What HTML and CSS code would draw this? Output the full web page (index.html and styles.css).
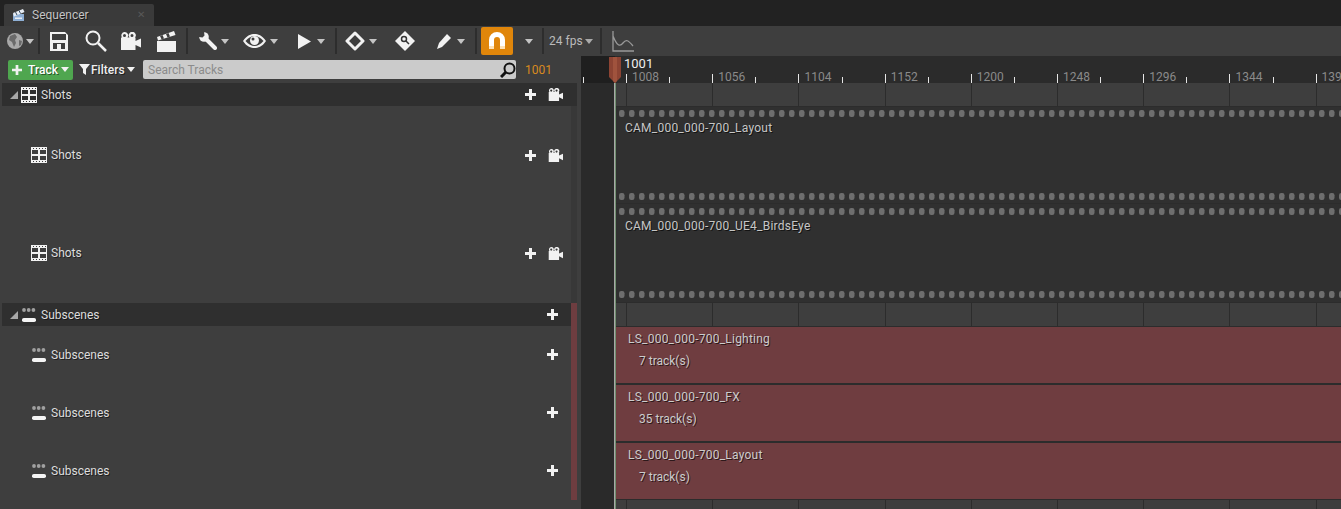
FILE: index.html
```html
<!DOCTYPE html>
<html lang="en">
<head>
    <meta charset="UTF-8">
    <title>Sequencer</title>
    <link rel="stylesheet" href="styles.css">
</head>
<body>
<svg class="defs" width="0" height="0">
    <symbol id="caret" viewBox="0 0 8 5"><path d="M0 0H8L4 5Z"/></symbol>
    <symbol id="plus" viewBox="0 0 11 11"><path d="M4 0H7V4H11V7H7V11H4V7H0V4H4Z"/></symbol>
    <symbol id="camera" viewBox="0 0 21 18">
        <path fill-rule="evenodd" d="M4.500 0a3.500 3.500 0 0 1 3 5.500h2a3.500 3.500 0 1 1 5.500 0h.5v3.500l5.500-2.500v9l-5.500-2.500v5.500H1V5.500h1a3.500 3.500 0 0 1 2.500-5.500ZM4.500 2a1.500 1.500 0 1 0 0 3 1.500 1.500 0 0 0 0-3ZM12 2a1.500 1.500 0 1 0 0 3 1.500 1.500 0 0 0 0-3Z"/>
    </symbol>
    <symbol id="film" viewBox="0 0 16 16">
        <path fill-rule="evenodd" d="M0 0H16V16H0ZM1 3V7H7V3ZM9 3V7H15V3ZM1 9V13H7V9ZM9 9V13H15V9ZM2 1V2H3V1ZM5 1V2H6V1ZM8 1V2H9V1ZM11 1V2H12V1ZM14 1V2H15V1ZM2 14V15H3V14ZM5 14V15H6V14ZM8 14V15H9V14ZM11 14V15H12V14ZM14 14V15H15V14Z"/>
    </symbol>
    <symbol id="scenes" viewBox="0 0 16 14">
        <circle cx="3" cy="2" r="1.900" fill="#a0a0a0"/><circle cx="7.700" cy="2" r="1.900" fill="#a0a0a0"/><circle cx="12.400" cy="2" r="1.900" fill="#a0a0a0"/>
        <rect x="1" y="10" width="14" height="4" rx="1.800" fill="#f5f5f5"/>
    </symbol>
    <pattern id="hole" width="10" height="7" patternUnits="userSpaceOnUse">
        <rect x="3" width="5.500" height="7" rx="2.300" fill="#6e6e6e"/>
    </pattern>
</svg>

<div class="app">
    <div class="tabbar">
        <div class="tab">
            <svg class="tab-icon" width="13" height="13" viewBox="0 0 13 13"><path fill="#8fb0d6" d="M1 5H12V12H1Z"/><path fill="#e8eef5" d="M1 4 11 0l1.500 3L2 7.500Z"/><path stroke="#33475e" d="M3.500 3 5 6M7 1.500 8.500 4.500"/><path fill="#e8eef5" d="M3 8.500H10V10H3Z"/></svg>
            <span class="tab-name">Sequencer</span>
            <span class="tab-close">&#10005;</span>
        </div>
    </div>

    <div class="toolbar">
        <svg class="ml-7" width="16" height="16" viewBox="0 0 16 16"><circle cx="8" cy="8" r="8" fill="#a8a8a8"/><path fill="#6a6a6a" d="M3 3 8 1l2 3-2 3 1 3-2 4-2-5-3-2ZM12 7l3 1-1 4-2 1Z"/></svg>
        <svg class="caret ml-3" width="8" height="5"><use href="#caret"/></svg>
        <i class="sep ml-4"></i>
        <svg class="icon ml-10" width="18" height="19" viewBox="0 0 18 19"><path fill-rule="evenodd" d="M0 0H15L18 3V19H0ZM2 2V8H16V2ZM3 11H15V17H11V12H7V17H3Z"/></svg>
        <svg class="ml-17" width="22" height="22" viewBox="0 0 22 22"><circle cx="8" cy="8" r="6.500" fill="none" stroke="#f2f2f2" stroke-width="2"/><path d="M13 13 21 21" stroke="#f2f2f2" stroke-width="2.500"/></svg>
        <svg class="icon ml-13" width="21" height="18"><use href="#camera"/></svg>
        <svg class="icon ml-16" width="19" height="22" viewBox="0 0 19 22"><path d="M0 11H19V22H0Z"/><path d="M0 7 17 1l1.500 4L1 10.500Z"/><path fill="#3e3e3e" d="M3 6 5.500 5 7 8.500 4.500 9.300ZM9 4l2.500-1 1.500 3.500-2.500.9Z"/></svg>
        <i class="sep ml-10"></i>
        <svg class="ml-11" width="18" height="18" viewBox="0 0 18 18"><path d="M6 6 16 16" stroke="#f2f2f2" stroke-width="4" stroke-linecap="round"/><circle cx="5" cy="5" r="4.800" fill="#f2f2f2"/><path fill="#3e3e3e" d="M0 0H5L5.500 3.500 3.500 5.500 0 5Z"/></svg>
        <svg class="caret ml-4" width="8" height="5"><use href="#caret"/></svg>
        <svg class="ml-14" width="23" height="14" viewBox="0 0 23 14"><path fill="#f2f2f2" fill-rule="evenodd" d="M0 7C4 1 8 0 11.500 0S19 1 23 7c-4 6-8 7-11.500 7S4 13 0 7ZM2.500 7c3 3.500 6 5 9 5s6-1.500 9-5c-3-3.500-6-5-9-5s-6 1.500-9 5Z"/><circle cx="11.500" cy="6.500" r="4.500" fill="#f2f2f2"/><circle cx="10" cy="5" r="1.500" fill="#3e3e3e"/></svg>
        <svg class="caret ml-4" width="8" height="5"><use href="#caret"/></svg>
        <svg class="icon ml-20" width="13" height="15" viewBox="0 0 13 15"><path d="M0 0 13 7.500 0 15Z"/></svg>
        <svg class="caret ml-6" width="8" height="5"><use href="#caret"/></svg>
        <i class="sep ml-10"></i>
        <svg class="ml-8" width="20" height="20" viewBox="0 0 20 20"><path fill="none" stroke="#f2f2f2" stroke-width="3" stroke-linejoin="round" d="M10 2 18 10 10 18 2 10Z"/></svg>
        <svg class="caret ml-4" width="8" height="5"><use href="#caret"/></svg>
        <svg class="ml-18" width="20" height="20" viewBox="0 0 20 20"><path fill="#f2f2f2" d="M10 0 20 10 10 20 0 10Z"/><circle cx="9" cy="8" r="2.500" fill="none" stroke="#333" stroke-width="1.500"/><path d="M11 10 14 13" stroke="#333" stroke-width="1.500"/></svg>
        <svg class="icon ml-22" width="14" height="15" viewBox="0 0 14 15"><path d="M10 0 14 4 5 13 0 15 2 9Z"/></svg>
        <svg class="caret ml-6" width="8" height="5"><use href="#caret"/></svg>
        <i class="sep ml-10"></i>
        <div class="snap ml-4">
            <svg width="20" height="20" viewBox="0 0 20 20"><path fill="none" stroke="#fff" stroke-width="5" d="M4.500 15V9a5.500 5.500 0 0 1 11 0V15"/><path fill="#ffe3b8" d="M2 15H7V18H2ZM13 15H18V18H13Z"/></svg>
        </div>
        <svg class="caret ml-12" width="8" height="5"><use href="#caret"/></svg>
        <i class="sep ml-9"></i>
        <span class="fps ml-5">24 fps</span>
        <svg class="caret caret-dim ml-2" width="8" height="5"><use href="#caret"/></svg>
        <i class="sep ml-7"></i>
        <svg class="ml-10" width="22" height="21" viewBox="0 0 22 21"><path fill="none" stroke="#999" stroke-width="1.300" d="M1 0V20H22M1 5C5 15 8 16 11 12s5-3 10 3"/></svg>
    </div>

    <div class="main">
        <div class="outliner">
            <div class="filterbar">
                <div class="add-track">
                    <svg class="icon" width="10" height="10"><use href="#plus"/></svg>
                    <span>Track</span>
                    <svg class="icon" width="8" height="5"><use href="#caret"/></svg>
                </div>
                <div class="filters">
                    <svg class="icon" width="11" height="11" viewBox="0 0 11 11"><path d="M0 0H11L7 5V11L4 9V5Z"/></svg>
                    <span>Filters</span>
                    <svg class="icon" width="8" height="5"><use href="#caret"/></svg>
                </div>
                <div class="search">
                    <span>Search Tracks</span>
                    <svg width="16" height="16" viewBox="0 0 16 16"><circle cx="9.500" cy="6.500" r="5" fill="none" stroke="#111" stroke-width="2"/><path d="M6 10 1 15" stroke="#111" stroke-width="3"/></svg>
                </div>
                <span class="frame">1001</span>
            </div>
            <div class="tree">
                <div class="rows">
                    <div class="row head head-shots">
                        <svg class="arrow" width="8" height="8" viewBox="0 0 8 8"><path d="M8 0V8H0Z"/></svg>
                        <svg class="icon" width="16" height="16"><use href="#film"/></svg>
                        <span class="row-name">Shots</span>
                        <svg class="icon add" width="11" height="11"><use href="#plus"/></svg>
                        <svg class="icon cam" width="15" height="13"><use href="#camera"/></svg>
                    </div>
                    <div class="row child shot-a">
                        <svg class="icon" width="16" height="16"><use href="#film"/></svg>
                        <span class="row-name">Shots</span>
                        <svg class="icon add" width="11" height="11"><use href="#plus"/></svg>
                        <svg class="icon cam" width="15" height="13"><use href="#camera"/></svg>
                    </div>
                    <div class="row child shot-b">
                        <svg class="icon" width="16" height="16"><use href="#film"/></svg>
                        <span class="row-name">Shots</span>
                        <svg class="icon add" width="11" height="11"><use href="#plus"/></svg>
                        <svg class="icon cam" width="15" height="13"><use href="#camera"/></svg>
                    </div>
                    <div class="row head">
                        <svg class="arrow" width="8" height="8" viewBox="0 0 8 8"><path d="M8 0V8H0Z"/></svg>
                        <svg width="16" height="14"><use href="#scenes"/></svg>
                        <span class="row-name">Subscenes</span>
                        <svg class="icon add add-last" width="11" height="11"><use href="#plus"/></svg>
                    </div>
                    <div class="row child scene">
                        <svg width="16" height="14"><use href="#scenes"/></svg>
                        <span class="row-name">Subscenes</span>
                        <svg class="icon add add-last" width="11" height="11"><use href="#plus"/></svg>
                    </div>
                    <div class="row child scene">
                        <svg width="16" height="14"><use href="#scenes"/></svg>
                        <span class="row-name">Subscenes</span>
                        <svg class="icon add add-last" width="11" height="11"><use href="#plus"/></svg>
                    </div>
                    <div class="row child scene">
                        <svg width="16" height="14"><use href="#scenes"/></svg>
                        <span class="row-name">Subscenes</span>
                        <svg class="icon add add-last" width="11" height="11"><use href="#plus"/></svg>
                    </div>
                </div>
                <div class="strip">
                    <div class="strip-shots"></div>
                    <div class="strip-scenes"></div>
                </div>
            </div>
        </div>

        <div class="timeline">
            <div class="ruler">
                <i class="tick"></i><i class="tick major"><b>1008</b></i>
                <i class="tick"></i><i class="tick major"><b>1056</b></i>
                <i class="tick"></i><i class="tick major"><b>1104</b></i>
                <i class="tick"></i><i class="tick major"><b>1152</b></i>
                <i class="tick"></i><i class="tick major"><b>1200</b></i>
                <i class="tick"></i><i class="tick major"><b>1248</b></i>
                <i class="tick"></i><i class="tick major"><b>1296</b></i>
                <i class="tick"></i><i class="tick major"><b>1344</b></i>
                <i class="tick"></i><i class="tick major"><b>1392</b></i>
            </div>
            <div class="tracks">
                <div class="band band-top"></div>
                <div class="shot shot-first">
                    <svg class="holes"><rect width="100%" height="7" fill="url(#hole)"/></svg>
                    <span class="shot-name">CAM_000_000-700_Layout</span>
                    <svg class="holes"><rect width="100%" height="7" fill="url(#hole)"/></svg>
                </div>
                <div class="shot shot-second">
                    <svg class="holes"><rect width="100%" height="7" fill="url(#hole)"/></svg>
                    <span class="shot-name">CAM_000_000-700_UE4_BirdsEye</span>
                    <svg class="holes"><rect width="100%" height="7" fill="url(#hole)"/></svg>
                </div>
                <div class="band band-mid"></div>
                <div class="scenes">
                    <div class="clip">
                        <span class="clip-name">LS_000_000-700_Lighting</span>
                        <span class="clip-count">7 track(s)</span>
                    </div>
                    <div class="clip">
                        <span class="clip-name">LS_000_000-700_FX</span>
                        <span class="clip-count">35 track(s)</span>
                    </div>
                    <div class="clip">
                        <span class="clip-name">LS_000_000-700_Layout</span>
                        <span class="clip-count">7 track(s)</span>
                    </div>
                </div>
                <div class="band band-end"></div>
            </div>
            <!-- playhead sits over the ruler and tracks -->
            <div class="playhead-line"></div>
            <svg class="playhead" width="12" height="26" viewBox="0 0 12 26"><path fill="#8d4433" d="M0 0H12V20L6 26 0 20Z"/><path fill="#a0533d" d="M4 0H8V24L6 26 4 24Z"/></svg>
            <span class="playhead-label">1001</span>
        </div>
    </div>
</div>
</body>
</html>
```
FILE: styles.css
```css
*{box-sizing:border-box;}
html,body{margin:0;height:100%;overflow:hidden;}
body{background:#222;color:#ddd;font:12px/14px Roboto,"Liberation Sans",sans-serif;}
.defs{position:absolute;}
.app{display:flex;flex-direction:column;width:1341px;height:509px;overflow:hidden;}
svg{display:block;flex:none;}
.icon{fill:#f2f2f2;}
.caret{fill:#c4c4c4;}
.caret-dim{fill:#aaa;}

.ml-2{margin-left:2px;}
.ml-3{margin-left:3px;}
.ml-4{margin-left:4px;}
.ml-5{margin-left:5px;}
.ml-6{margin-left:6px;}
.ml-7{margin-left:7px;}
.ml-8{margin-left:8px;}
.ml-9{margin-left:9px;}
.ml-10{margin-left:10px;}
.ml-11{margin-left:11px;}
.ml-12{margin-left:12px;}
.ml-13{margin-left:13px;}
.ml-14{margin-left:14px;}
.ml-16{margin-left:16px;}
.ml-17{margin-left:17px;}
.ml-18{margin-left:18px;}
.ml-20{margin-left:20px;}
.ml-22{margin-left:22px;}

/* tab strip */
.tabbar{height:26px;flex:none;padding:4px 0 0 4px;background:#222;}
.tab{display:flex;align-items:center;width:150px;height:22px;padding-left:8px;background:#3a3a3a;border-radius:2px 2px 0 0;}
.tab-name{margin-left:7px;color:#c4c4c4;text-shadow:1px 1px 0 rgba(0,0,0,.6);}
.tab-close{margin-left:auto;margin-right:9px;font-size:10px;color:#585858;}

/* toolbar */
.toolbar{display:flex;align-items:center;height:30px;flex:none;background:#3e3e3e;}
.sep{display:block;width:2px;height:26px;background:#2d2d2d;flex:none;}
.snap{display:flex;align-items:center;justify-content:center;width:32px;height:28px;background:#e0860b;border-radius:2px;}
.fps{color:#bbb;width:34px;white-space:nowrap;}

.main{display:flex;flex:1;min-height:0;}

/* left side */
.outliner{width:581px;flex:none;display:flex;flex-direction:column;background:#3e3e3e;}
.filterbar{display:flex;align-items:center;height:27px;flex:none;padding-left:8px;}
.add-track{display:flex;align-items:center;width:65px;height:20px;padding-left:4px;background:#4fa64f;border-radius:2px;color:#fff;font-weight:500;text-shadow:1px 1px 0 rgba(0,0,0,.5);}
.add-track span{margin:0 4px 0 6px;width:29px;}
.filters{display:flex;align-items:center;margin-left:6px;width:64px;color:#eee;font-weight:500;text-shadow:1px 1px 0 rgba(0,0,0,.5);}
.filters span{margin:0 3px 0 1px;width:33px;}
.search{display:flex;align-items:center;justify-content:space-between;width:373px;height:19px;padding-left:5px;background:#cbcbcb;border-radius:2px;color:#8b8b8b;}
.frame{margin-left:9px;color:#d98a1e;}

.tree{display:flex;flex:1;min-height:0;padding-left:2px;}
.rows{width:569px;flex:none;}
.row{display:flex;align-items:center;padding-right:8px;text-shadow:1px 1px 0 rgba(0,0,0,.5);}
.row-name{margin-left:4px;}
.head{height:23px;background:#2f2f2f;padding-left:8px;}
.head .arrow{fill:#a8a8a8;margin-right:3px;}
.head-shots{width:575px;padding-right:14px;}
.child{padding-left:29px;}
.shot-a{height:98px;}
.shot-b{height:98px;margin-bottom:1px;}
.scene{height:58px;}
.add{margin-left:auto;}
.cam{margin-left:12px;}
.add-last{margin-right:5px;}
.scene .add{margin-bottom:2px;}
.strip{width:6px;flex:none;}
.strip-shots{height:197px;margin-top:23px;background:#383838;}
.strip-scenes{height:197px;background:#6e3d40;}

/* right side */
.timeline{position:relative;flex:1;min-width:0;background:#2a2a2a;overflow:hidden;}
.ruler{display:flex;height:27px;padding-left:2px;background:linear-gradient(90deg,#1f1f1f 34px,#2b2b2b 34px);align-items:flex-end;}
.tick{display:block;flex:none;width:43.1px;height:6px;border-left:1px solid #e6e6e6;font-style:normal;}
.tick.major{height:9px;}
.tick b{display:block;margin:-4px 0 0 5px;font-weight:400;font-size:12px;line-height:14px;color:#8a8a8a;white-space:nowrap;}
.tracks{margin-left:35px;background:#303030;}
.band{background:repeating-linear-gradient(90deg,#2c2c2c 10px,#2c2c2c 11px,#3e3e3e 11px,#3e3e3e 96.2px);border-bottom:1px solid #2c2c2c;}
.band-top{height:24px;}
.band-mid{height:24px;}
.band-end{height:10px;}
.shot{display:flex;flex-direction:column;padding:4px 0;border-bottom:1px solid #2c2c2c;}
.shot-first{height:97px;padding:3px 0;}
.shot-second{height:99px;}
.holes{width:100%;height:7px;}
.shot-name{margin:4px 0 auto 9px;color:#c6c6c6;letter-spacing:.23px;text-shadow:1px 1px 0 rgba(0,0,0,.6);}
.scenes{display:flex;flex-direction:column;gap:2px;padding:0 0 1px;background:#2c2c2c;}
.clip{display:flex;flex-direction:column;height:56px;padding:5px 0 0 12px;background:#6f3d40;color:#ccc;text-shadow:1px 1px 0 rgba(0,0,0,.6);}
.clip-name{letter-spacing:.23px;}
.clip-count{margin:8px 0 0 11px;}
.playhead-line{position:absolute;left:33px;top:27px;bottom:0;width:2px;background:linear-gradient(90deg,#a8a8a8 50%,#6f8f6f 50%);}
.playhead{position:absolute;left:28px;top:1px;}
.playhead-label{position:absolute;left:43px;top:1px;font-size:13px;color:#eee;line-height:14px;}
```
